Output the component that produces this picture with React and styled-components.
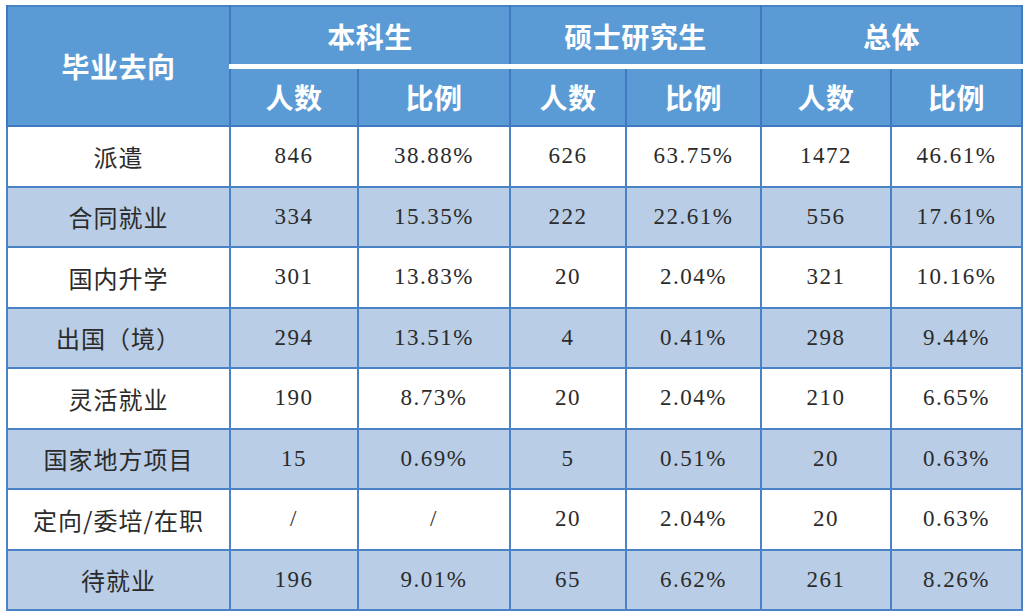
import React from 'react';
import styled, { createGlobalStyle } from 'styled-components';

const GlobalStyle = createGlobalStyle`
  body {
    margin: 0;
    background: #ffffff;
    font-family: "Noto Sans CJK SC", "Liberation Sans", sans-serif;
  }
`;

const groups = ['本科生', '硕士研究生', '总体'];

const rows = [
  ['派遣', '846', '38.88%', '626', '63.75%', '1472', '46.61%'],
  ['合同就业', '334', '15.35%', '222', '22.61%', '556', '17.61%'],
  ['国内升学', '301', '13.83%', '20', '2.04%', '321', '10.16%'],
  ['出国（境）', '294', '13.51%', '4', '0.41%', '298', '9.44%'],
  ['灵活就业', '190', '8.73%', '20', '2.04%', '210', '6.65%'],
  ['国家地方项目', '15', '0.69%', '5', '0.51%', '20', '0.63%'],
  ['定向/委培/在职', '/', '/', '20', '2.04%', '20', '0.63%'],
  ['待就业', '196', '9.01%', '65', '6.62%', '261', '8.26%'],
];

const colWidths = [223, 128, 152, 116, 135, 130, 131];

const Page = styled.div`
  padding: 5px 0 0 6px;
`;

const Table = styled.table`
  width: 1015px;
  table-layout: fixed;
  border-collapse: collapse;
  border: 2px solid #4a82c6;
`;

const HeadCell = styled.th`
  background: #5b9bd5;
  color: #ffffff;
  font-family: "Noto Sans CJK SC", sans-serif;
  font-weight: 700;
  font-size: 28px;
  letter-spacing: 0.5px;
  padding: 0;
  text-align: center;
  border-left: 2px solid #3f79bf;
  border-right: 2px solid #3f79bf;
  border-bottom: ${p => (p.group ? '5px solid #ffffff' : '2px solid #3f79bf')};
  height: ${p => (p.group ? '57px' : '56px')};
`;

const Cell = styled.td`
  background: ${p => (p.alt ? '#b9cde6' : '#ffffff')};
  color: #2b2b2b;
  font-family: ${p => (p.label ? '"Noto Sans CJK SC", sans-serif' : '"Liberation Serif", "Noto Sans CJK SC", serif')};
  font-size: ${p => (p.label ? '24px' : '23px')};
  font-weight: 400;
  letter-spacing: ${p => (p.label ? '1px' : '1.5px')};
  text-align: center;
  padding: 0;
  height: 58.5px;
  border: 2px solid #4a82c6;
`;

export default function App() {
  return (
    <Page>
      <GlobalStyle />
      <Table>
        <colgroup>
          {colWidths.map((w, i) => (
            <col key={i} style={{ width: w }} />
          ))}
        </colgroup>
        <thead>
          <tr>
            <HeadCell rowSpan={2}>毕业去向</HeadCell>
            {groups.map(g => (
              <HeadCell key={g} colSpan={2} group>
                {g}
              </HeadCell>
            ))}
          </tr>
          <tr>
            {groups.map(g => (
              <React.Fragment key={g}>
                <HeadCell>人数</HeadCell>
                <HeadCell>比例</HeadCell>
              </React.Fragment>
            ))}
          </tr>
        </thead>
        <tbody>
          {rows.map((r, i) => (
            <tr key={r[0]}>
              {r.map((v, j) => (
                <Cell key={j} alt={i % 2 === 1} label={j === 0}>
                  {v}
                </Cell>
              ))}
            </tr>
          ))}
        </tbody>
      </Table>
    </Page>
  );
}
